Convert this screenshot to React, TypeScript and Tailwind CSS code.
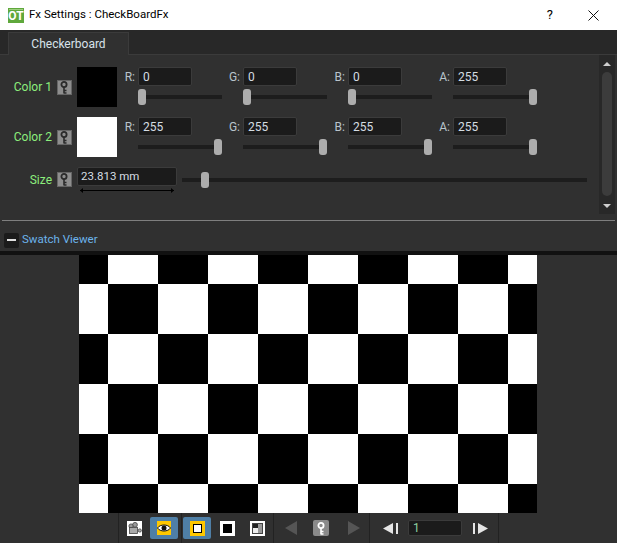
import type { FC } from "react";

const font = { fontFamily: 'Roboto, sans-serif' };

const KeyGlyph: FC<{ color: string }> = ({ color }) => (
  <svg width="11" height="13" viewBox="0 0 11 13" fill="none">
    <circle cx="5" cy="3.5" r="2.6" stroke={color} strokeWidth="1.8" />
    <path d="M5 6v6.5M5 9.5h2.5M5 12h2.5" stroke={color} strokeWidth="1.6" />
  </svg>
);

const KeyButton = () => (
  <div className="w-[15px] h-[15px] shrink-0 bg-[#8e8e8e] border border-[#666] flex items-center justify-center">
    <KeyGlyph color="#2b2b2b" />
  </div>
);

const Slider: FC<{ left: number; width: number }> = ({ left, width }) => (
  <div className="relative h-1 bg-[#1d1d1d]" style={{ width }}>
    <div
      className="absolute top-[-6px] w-2 h-4 rounded-[3px] bg-[#adadad]"
      style={{ left }}
    />
  </div>
);

const Channel: FC<{ label: string; value: string; thumb: number }> = ({ label, value, thumb }) => (
  <div className="w-[105px] shrink-0">
    <div className="flex items-center h-[19px]">
      <span className="w-4 pr-[3px] flex justify-end text-[12px] text-[#b9c4cc] whitespace-nowrap">{label}</span>
      <div className="w-[54px] h-[19px] pl-1 flex items-center bg-[#1b1b1b] border border-[#3b3b3b] rounded-[2px] text-[12px] text-[#d5dde2]">
        {value}
      </div>
    </div>
    <div className="ml-4 mt-[9px]">
      <Slider left={thumb} width={84} />
    </div>
  </div>
);

const ColorRow: FC<{ label: string; swatch: string; values: [string, number][] }> = ({ label, swatch, values }) => {
  const names = ["R:", "G:", "B:", "A:"];
  return (
    <div className="flex h-10">
      <div className="w-[72px] flex items-center gap-[5px] justify-end shrink-0">
        <span className="text-[12px] text-[#8cee7c]">{label}</span>
        <KeyButton />
      </div>
      <div className={`w-10 h-10 ml-[5px] shrink-0 ${swatch}`} />
      <div className="flex ml-[5px]">
        {values.map(([v, t], i) => (
          <Channel key={names[i]} label={names[i]} value={v} thumb={t} />
        ))}
      </div>
    </div>
  );
};

const columns = [0, 1, 2, 3, 4, 5, 6, 7, 8, 9];
const rows = [0, 1, 2, 3, 4, 5];

const Checkerboard = () => (
  <div className="grid grid-cols-[29px_repeat(8,50px)_29px] grid-rows-[29px_repeat(4,50px)_29px] w-[458px] h-[258px]">
    {rows.map((r) =>
      columns.map((c) => (
        <div key={`${r}-${c}`} className={(r + c) % 2 === 0 ? "bg-black" : "bg-white"} />
      ))
    )}
  </div>
);

const Divider = () => <div className="w-px h-[30px] bg-[#222] shrink-0" />;

const Triangle: FC<{ dir: "l" | "r"; color: string }> = ({ dir, color }) => (
  <svg width="12" height="14" viewBox="0 0 12 14">
    <path d={dir === "l" ? "M12 0v14L0 7z" : "M0 0v14L12 7z"} fill={color} />
  </svg>
);

const Toolbar = () => (
  <div className="h-[30px] flex items-center pl-[118px] bg-[#303030]">
    <Divider />
    <div className="w-[15px] h-[15px] ml-2 bg-white flex items-center justify-center shrink-0">
      <svg width="15" height="15" viewBox="0 0 15 15">
        <circle cx="8" cy="3.8" r="2.4" fill="#999" stroke="#444" strokeWidth=".8" />
        <circle cx="4" cy="5" r="2.1" fill="#999" stroke="#444" strokeWidth=".8" />
        <rect x="2.5" y="6.5" width="8" height="6" fill="#aaa" stroke="#444" strokeWidth=".8" />
        <circle cx="12.8" cy="9.5" r="1.6" fill="#aaa" stroke="#444" strokeWidth=".8" />
      </svg>
    </div>
    <div className="w-7 h-[22px] ml-2 bg-[#4f7fa6] rounded-[2px] flex items-center justify-center shrink-0">
      <div className="w-[14px] h-[14px] bg-[#ffc800] flex items-center justify-center">
        <svg width="14" height="10" viewBox="0 0 14 10">
          <path d="M0.5 5C3 1 11 1 13.5 5C11 9 3 9 0.5 5z" fill="#fff" stroke="#111" />
          <circle cx="7" cy="5" r="2.5" fill="#111" />
        </svg>
      </div>
    </div>
    <div className="w-[3px] shrink-0" />
    <Divider />
    <div className="w-7 h-[22px] ml-[1px] bg-[#4f7fa6] rounded-[2px] flex items-center justify-center shrink-0">
      <div className="w-[15px] h-[15px] bg-[#ffc800] flex items-center justify-center">
        <div className="w-[9px] h-[9px] bg-white border border-black" />
      </div>
    </div>
    <div className="w-[15px] h-[15px] ml-[9px] bg-white flex items-center justify-center shrink-0">
      <div className="w-[9px] h-[9px] bg-black" />
    </div>
    <div className="w-[15px] h-[15px] ml-[15px] bg-white flex items-center justify-center shrink-0">
      <div className="w-[11px] h-[11px] bg-[#444] flex items-center justify-center">
        <div className="w-[9px] h-[9px] grid grid-cols-2 grid-rows-2">
          <div className="bg-[#222]" />
          <div className="bg-[#999]" />
          <div className="bg-[#eee]" />
          <div className="bg-[#999]" />
        </div>
      </div>
    </div>
    <div className="w-2 shrink-0" />
    <Divider />
    <div className="ml-[11px] flex shrink-0">
      <Triangle dir="l" color="#555" />
    </div>
    <div className="w-4 h-4 ml-4 bg-[#8a8a8a] rounded-[2px] flex items-center justify-center shrink-0">
      <KeyGlyph color="#fff" />
    </div>
    <div className="ml-[19px] flex shrink-0">
      <Triangle dir="r" color="#555" />
    </div>
    <div className="w-[9px] shrink-0" />
    <Divider />
    <div className="ml-[13px] flex items-center gap-[3px] shrink-0">
      <svg width="10" height="11" viewBox="0 0 10 11">
        <path d="M10 0v11L0 5.5z" fill="#e6e6e6" />
      </svg>
      <div className="w-[2px] h-[11px] bg-[#e6e6e6]" />
    </div>
    <div className="w-[54px] h-4 ml-[10px] pl-1 flex items-center bg-[#1b1b1b] border border-[#3b3b3b] rounded-[2px] text-[12px] text-[#8fd0a0] shrink-0">
      1
    </div>
    <div className="ml-[11px] flex items-center gap-[3px] shrink-0">
      <div className="w-[2px] h-[11px] bg-[#e6e6e6]" />
      <svg width="10" height="11" viewBox="0 0 10 11">
        <path d="M0 0v11L10 5.5z" fill="#e6e6e6" />
      </svg>
    </div>
    <div className="w-[10px] shrink-0" />
    <Divider />
  </div>
);

export default function App() {
  return (
    <div className="w-[617px] h-[543px] overflow-hidden bg-[#303030]" style={font}>
      {/* title bar */}
      <div className="h-[30px] bg-white flex items-center pl-2 pr-[18px]">
        <div className="relative w-4 h-[15px] bg-[#5fa83c] flex items-end justify-center text-[12px] leading-[13px] font-bold text-white shrink-0">
          OT
          <div className="absolute top-[1px] inset-x-[1px] h-px bg-[#9ed080]" />
        </div>
        <span className="ml-[5px] text-[11.5px] text-black">Fx Settings : CheckBoardFx</span>
        <span className="ml-auto text-[13px] text-black">?</span>
        <svg className="ml-[35px]" width="11" height="11" viewBox="0 0 11 11">
          <path d="M.5.5l10 10M10.5.5l-10 10" stroke="#111" strokeWidth="1" />
        </svg>
      </div>

      {/* tabs */}
      <div className="h-[25px] pl-2 pt-[2px] bg-[#282828] border-b border-[#3b3b3b] flex">
        <div className="w-[121px] h-[23px] bg-[#303030] border border-b-0 border-[#3b3b3b] flex items-center justify-center text-[12px] text-[#d8e2ea]">
          Checkerboard
        </div>
      </div>

      {/* params */}
      <div className="h-[165px] flex">
        <div className="w-[599px] shrink-0 pt-3">
          <div className="flex flex-col gap-[10px]">
            <ColorRow
              label="Color 1"
              swatch="bg-black"
              values={[["0", 0], ["0", 0], ["0", 0], ["255", 76]]}
            />
            <ColorRow
              label="Color 2"
              swatch="bg-white"
              values={[["255", 76], ["255", 76], ["255", 76], ["255", 76]]}
            />
            <div className="flex h-6">
              <div className="w-[72px] flex items-center gap-[5px] justify-end shrink-0 h-[15px] mt-[5px]">
                <span className="text-[12px] text-[#8cee7c]">Size</span>
                <KeyButton />
              </div>
              <div className="ml-[5px] w-[100px] shrink-0">
                <div className="h-[19px] pl-[3px] flex items-center bg-[#1b1b1b] border border-[#3b3b3b] rounded-[2px] text-[11.5px] text-[#d5dde2]">
                  23.813 mm
                </div>
                <svg className="mt-[2px] ml-[3px]" width="94" height="5" viewBox="0 0 94 5">
                  <path d="M0 2.5h94" stroke="#000" />
                  <path d="M3 0v5L0 2.5zM91 0v5l3-2.5z" fill="#000" />
                </svg>
              </div>
              <div className="ml-[5px] mt-[11px]">
                <Slider left={19} width={405} />
              </div>
            </div>
          </div>
        </div>
        <div className="w-4 h-[159px] bg-[#282828] flex flex-col items-center pt-[7px]">
          <div className="w-0 h-0 border-x-[4px] border-x-transparent border-b-[4px] border-b-[#cfcfcf]" />
          <div className="w-[10px] h-[124px] mt-[6px] rounded-[5px] bg-[#3c3c3c]" />
          <div className="w-0 h-0 mt-[8px] border-x-[4px] border-x-transparent border-t-[4px] border-t-[#cfcfcf]" />
        </div>
      </div>

      {/* separator */}
      <div className="h-px mx-[2px] bg-[#7f7f7f]" />

      {/* swatch header */}
      <div className="h-[30px] flex items-center pl-1 pt-2">
        <div className="w-[15px] h-[15px] bg-[#1b1b1b] rounded-[2px] flex items-center justify-center">
          <div className="w-[9px] h-[2px] bg-[#e0e0e0]" />
        </div>
        <span className="ml-[3px] text-[11.5px] text-[#6cb4ec]">Swatch Viewer</span>
      </div>
      <div className="h-1 bg-[#111]" />

      {/* viewer */}
      <div className="pl-[79px]">
        <Checkerboard />
      </div>

      <Toolbar />
    </div>
  );
}
